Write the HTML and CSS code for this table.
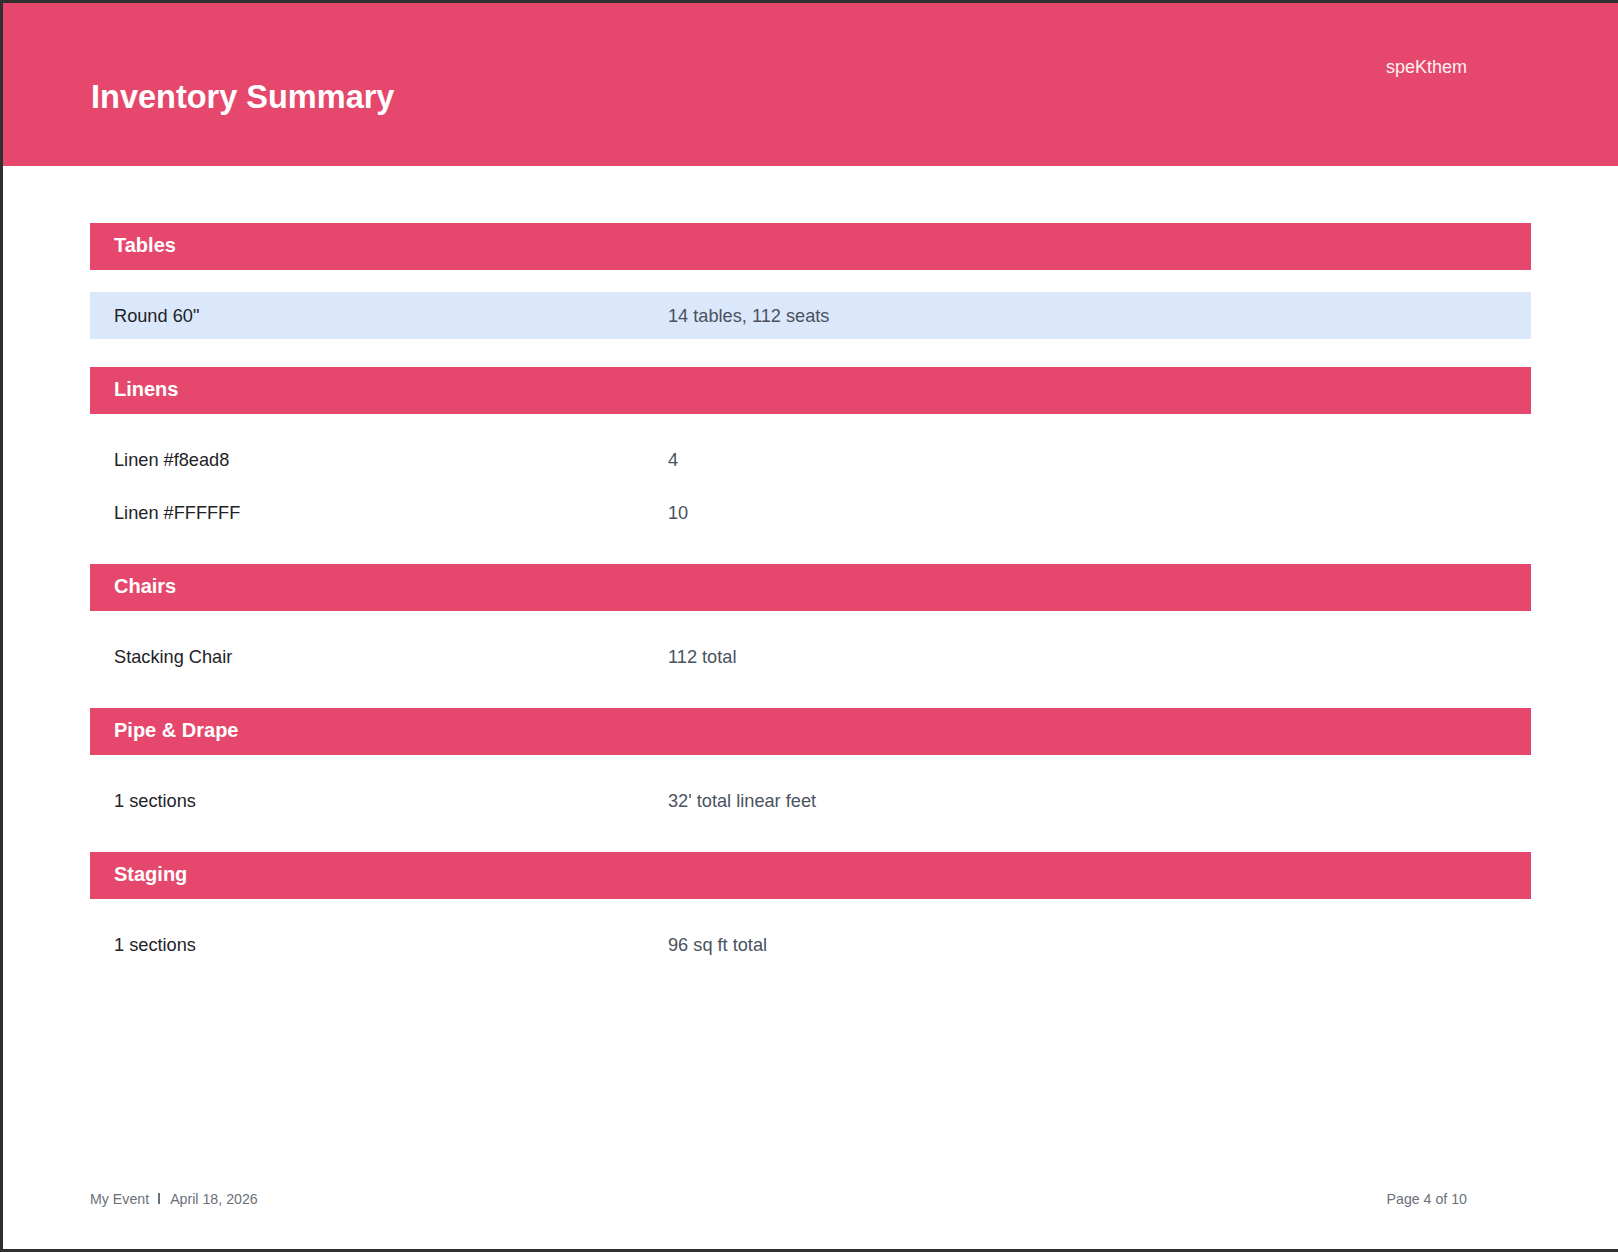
FILE: index.html
```html
<!DOCTYPE html>
<html lang="en">
<head>
<meta charset="utf-8">
<title>Inventory Summary</title>
<link rel="stylesheet" href="styles.css">
</head>
<body>
<div class="page">
  <header class="banner">
    <h1 class="title">Inventory Summary</h1>
    <div class="brand">speKthem</div>
  </header>
  <main class="content">
    <section class="group">
      <h2 class="group-head">Tables</h2>
      <div class="row row-hl"><span class="label">Round 60"</span><span class="value">14 tables, 112 seats</span></div>
    </section>
    <section class="group">
      <h2 class="group-head">Linens</h2>
      <div class="row"><span class="label">Linen #f8ead8</span><span class="value">4</span></div>
      <div class="row"><span class="label">Linen #FFFFFF</span><span class="value">10</span></div>
    </section>
    <section class="group">
      <h2 class="group-head">Chairs</h2>
      <div class="row"><span class="label">Stacking Chair</span><span class="value">112 total</span></div>
    </section>
    <section class="group">
      <h2 class="group-head">Pipe &amp; Drape</h2>
      <div class="row"><span class="label">1 sections</span><span class="value">32' total linear feet</span></div>
    </section>
    <section class="group">
      <h2 class="group-head">Staging</h2>
      <div class="row"><span class="label">1 sections</span><span class="value">96 sq ft total</span></div>
    </section>
  </main>
  <footer class="foot">
    <div class="foot-left">My Event<span class="sep"></span>April 18, 2026</div>
    <div class="foot-right">Page 4 of 10</div>
  </footer>
</div>
</body>
</html>
```
FILE: styles.css
```css
html, body {
  margin: 0;
  padding: 0;
  background: #ffffff;
}
body {
  font-family: "Liberation Sans", Arial, sans-serif;
}
.page {
  box-sizing: border-box;
  min-height: 1252px;
  border: 3px solid #303030;
  border-right: none;
  display: flex;
  flex-direction: column;
  background: #ffffff;
}
.banner {
  box-sizing: border-box;
  height: 163px;
  background: #e5486c;
  padding: 52px 151px 0 87px;
  display: flex;
  justify-content: space-between;
  align-items: flex-start;
}
.title {
  margin: 22px 0 0 1px;
  font-size: 32.5px;
  line-height: 40px;
  font-weight: 700;
  color: #ffffff;
}
.brand {
  font-size: 18px;
  line-height: 24px;
  color: #fdf0f3;
}
.content {
  padding: 57px 87px 0 87px;
}
.group {
  margin-bottom: 28px;
  display: flex;
  flex-direction: column;
  gap: 6px;
}
.group-head {
  margin: 0 0 16px 0;
  height: 47px;
  padding: 0 24px;
  background: #e5486c;
  color: #ffffff;
  font-size: 20px;
  line-height: 44px;
  font-weight: 700;
}
.row {
  display: grid;
  grid-template-columns: 554px 1fr;
  height: 47px;
  padding: 0 24px;
  font-size: 18.2px;
  line-height: 49px;
}
.row-hl {
  background: #dbe8fb;
}
.label {
  color: #1f2328;
}
.value {
  color: #4a5260;
}
.foot {
  margin-top: auto;
  padding: 0 151px 40px 87px;
  display: flex;
  justify-content: space-between;
  font-size: 14.2px;
  line-height: 20px;
  color: #6b7079;
}
.sep {
  display: inline-block;
  width: 2px;
  height: 11px;
  background: #6b7079;
  margin: 0 10px 0 9px;
  vertical-align: 0;
}
```
